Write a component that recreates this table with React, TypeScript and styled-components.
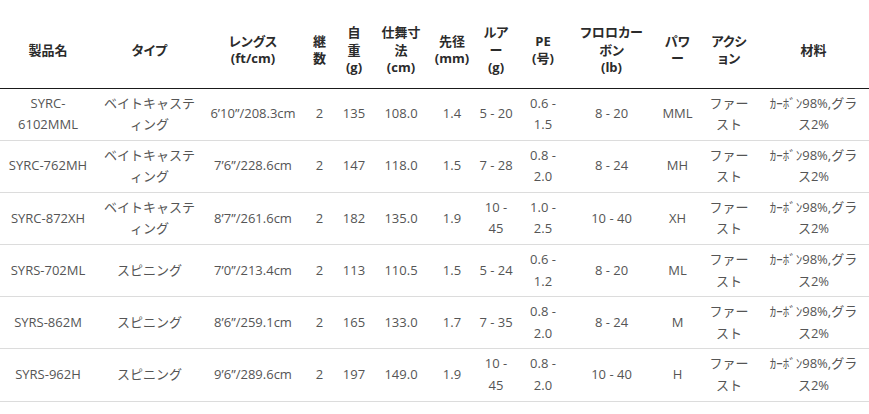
import * as React from 'react';
import styled, { createGlobalStyle } from 'styled-components';

const GlobalStyle = createGlobalStyle`
    html, body {
        margin: 0;
        padding: 0;
        background: #ffffff;
    }
    body {
        font-family: 'Open Sans', 'Noto Sans CJK JP', sans-serif;
    }
`;

// column widths in px, left to right
const widths = [96, 107, 100, 33, 36, 58, 44, 44, 50, 87, 45, 58, 111];

const headers = [
    '製品名',
    'タイプ',
    'レングス\n(ft/cm)',
    '継\n数',
    '自\n重\n(g)',
    '仕舞寸\n法\n(cm)',
    '先径\n(mm)',
    'ルア\nー\n(g)',
    'PE\n(号)',
    'フロロカー\nボン\n(lb)',
    'パワ\nー',
    'アクシ\nョン',
    '材料',
];

const material = 'ｶｰﾎﾞﾝ98%,グラ\nス2%';
const fast = 'ファー\nスト';
const baitcast = 'ベイトキャステ\nィング';

const rows: string[][] = [
    ['SYRC-\n6102MML', baitcast, '6’10”/208.3cm', '2', '135', '108.0', '1.4', '5 - 20', '0.6 -\n1.5', '8 - 20', 'MML', fast, material],
    ['SYRC-762MH', baitcast, '7’6”/228.6cm', '2', '147', '118.0', '1.5', '7 - 28', '0.8 -\n2.0', '8 - 24', 'MH', fast, material],
    ['SYRC-872XH', baitcast, '8’7”/261.6cm', '2', '182', '135.0', '1.9', '10 -\n45', '1.0 -\n2.5', '10 - 40', 'XH', fast, material],
    ['SYRS-702ML', 'スピニング', '7’0”/213.4cm', '2', '113', '110.5', '1.5', '5 - 24', '0.6 -\n1.2', '8 - 20', 'ML', fast, material],
    ['SYRS-862M', 'スピニング', '8’6”/259.1cm', '2', '165', '133.0', '1.7', '7 - 35', '0.8 -\n2.0', '8 - 24', 'M', fast, material],
    ['SYRS-962H', 'スピニング', '9’6”/289.6cm', '2', '197', '149.0', '1.9', '10 -\n45', '0.8 -\n2.0', '10 - 40', 'H', fast, material],
];

export default function App() {
    return (
        <Page>
            <GlobalStyle />
            <SpecTable>
                <colgroup>
                    {widths.map((w, i) => (
                        <col key={i} style={{ width: w }} />
                    ))}
                </colgroup>
                <thead>
                    <tr>
                        {headers.map((h, i) => (
                            <HeadCell key={i}>{h}</HeadCell>
                        ))}
                    </tr>
                </thead>
                <tbody>
                    {rows.map((row, r) => (
                        <Row key={r}>
                            {row.map((cell, c) => (
                                <Cell key={c}>{cell}</Cell>
                            ))}
                        </Row>
                    ))}
                </tbody>
            </SpecTable>
        </Page>
    );
}

const Page = styled.div`
    width: 869px;
    padding-top: 12px;
`;

const SpecTable = styled.table`
    width: 869px;
    table-layout: fixed;
    border-collapse: collapse;
    border-spacing: 0;
`;

const HeadCell = styled.th`
    padding: 12px 0 11px;
    font-size: 13px;
    line-height: 17.5px;
    font-weight: 700;
    color: #2b2b2b;
    text-align: center;
    vertical-align: middle;
    white-space: pre-line;
    font-feature-settings: 'palt';
    border-bottom: 1px solid #1a1a1a;
`;

const Row = styled.tr`
    border-bottom: 1px solid #dcdcdc;
`;

const Cell = styled.td`
    padding: 4px 0;
    font-size: 13px;
    line-height: 21.6px;
    color: #555555;
    text-align: center;
    vertical-align: middle;
    white-space: pre-line;
`;
